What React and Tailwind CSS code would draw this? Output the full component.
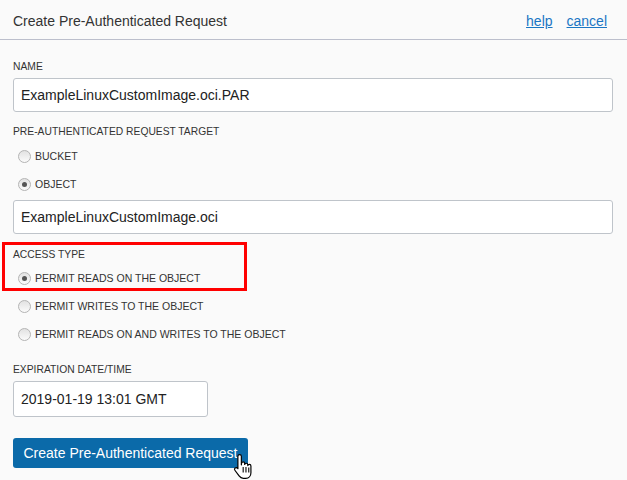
import React from "react";

function Radio({ checked, label }) {
  return (
    <div className="flex h-[28px] items-center pl-[5px]">
      <span className="relative flex h-[13px] w-[13px] items-center justify-center rounded-full border border-[#b4b4b4] bg-gradient-to-b from-[#e2e2e2] to-[#fbfbfb]">
        {checked && <span className="h-[5px] w-[5px] rounded-full bg-[#555]" />}
      </span>
      <span className="ml-[4px] text-[10.5px] leading-[13px] text-[#333]">{label}</span>
    </div>
  );
}

function Label({ children, className = "" }) {
  return (
    <div className={"h-[13px] text-[10.3px] leading-[13px] text-[#333] " + className}>
      {children}
    </div>
  );
}

function Input({ value, className = "" }) {
  return (
    <div
      className={
        "flex items-center rounded-[3px] border border-[#bfc4ca] bg-white pl-[7px] text-[14px] text-[#222] " +
        className
      }
    >
      {value}
    </div>
  );
}

function Hand() {
  return (
    <svg width="24" height="28" viewBox="0 0 22 26" className="absolute left-[220px] top-[15px]">
      <path
        d="M6 1.5c1 0 1.6.7 1.6 1.6V11l.2-1.6c.2-.8.8-1.2 1.5-1.2s1.4.5 1.4 1.3v1.2c.2-.8.8-1.2 1.5-1.2.8 0 1.4.6 1.4 1.4v.8c.2-.7.8-1.1 1.5-1.1.8 0 1.4.6 1.4 1.4v6.3c0 2.7-1.8 5.2-4.8 5.2H9.5c-1.8 0-3-.8-4-2.2L1.6 16c-.5-.7-.4-1.6.2-2.1.7-.6 1.6-.5 2.2.2l.4.5V3.1C4.4 2.2 5 1.5 6 1.5z"
        fill="#fff"
        stroke="#000"
        strokeWidth="1.1"
        strokeLinejoin="round"
      />
      <path d="M9.3 13v5M11.9 13v5M14.5 13.5v4.5" stroke="#000" strokeWidth="1" />
    </svg>
  );
}

export default function App() {
  return (
    <div
      className="h-[480px] w-[627px] overflow-hidden bg-[#fafafa] text-[#333]"
      style={{ fontFamily: '"Liberation Sans", Arial, sans-serif' }}
    >
      <div className="flex h-[40px] items-center border-b border-[#bcbfcc] pl-[13px] pr-[20px]">
        <div className="flex-1 pt-[3px] text-[14px] text-[#333]">Create Pre-Authenticated Request</div>
        <a className="pt-[3px] text-[14px] text-[#1a76c4] underline">help</a>
        <a className="ml-[14px] pt-[3px] text-[14px] text-[#1a76c4] underline">cancel</a>
      </div>

      <div className="pl-[13px] pr-[14px] pt-[20px]">
        <Label>NAME</Label>
        <Input value="ExampleLinuxCustomImage.oci.PAR" className="mt-[5px] h-[34px]" />

        <Label className="mt-[13px]">PRE-AUTHENTICATED REQUEST TARGET</Label>
        <div className="mt-[4px]">
          <Radio label="BUCKET" />
          <Radio checked label="OBJECT" />
        </div>
        <Input value="ExampleLinuxCustomImage.oci" className="mt-[2px] h-[34px]" />

        <div className="relative mt-[14px]">
          <div className="pointer-events-none absolute left-[-11px] top-[-6px] h-[49px] w-[245px] border-[3px] border-[#f00]" />
          <Label>ACCESS TYPE</Label>
          <div className="mt-[3px]">
            <Radio checked label="PERMIT READS ON THE OBJECT" />
            <Radio label="PERMIT WRITES TO THE OBJECT" />
            <Radio label="PERMIT READS ON AND WRITES TO THE OBJECT" />
          </div>
        </div>

        <Label className="mt-[15px]">EXPIRATION DATE/TIME</Label>
        <Input value="2019-01-19 13:01 GMT" className="mt-[5px] h-[36px] w-[195px]" />

        <div className="relative mt-[21px] w-[235px]">
          <button className="flex h-[30px] w-[235px] items-center justify-center rounded-[3px] bg-[#0b6aa9] text-[14px] text-white">
            Create Pre-Authenticated Request
          </button>
          <Hand />
        </div>
      </div>
    </div>
  );
}
